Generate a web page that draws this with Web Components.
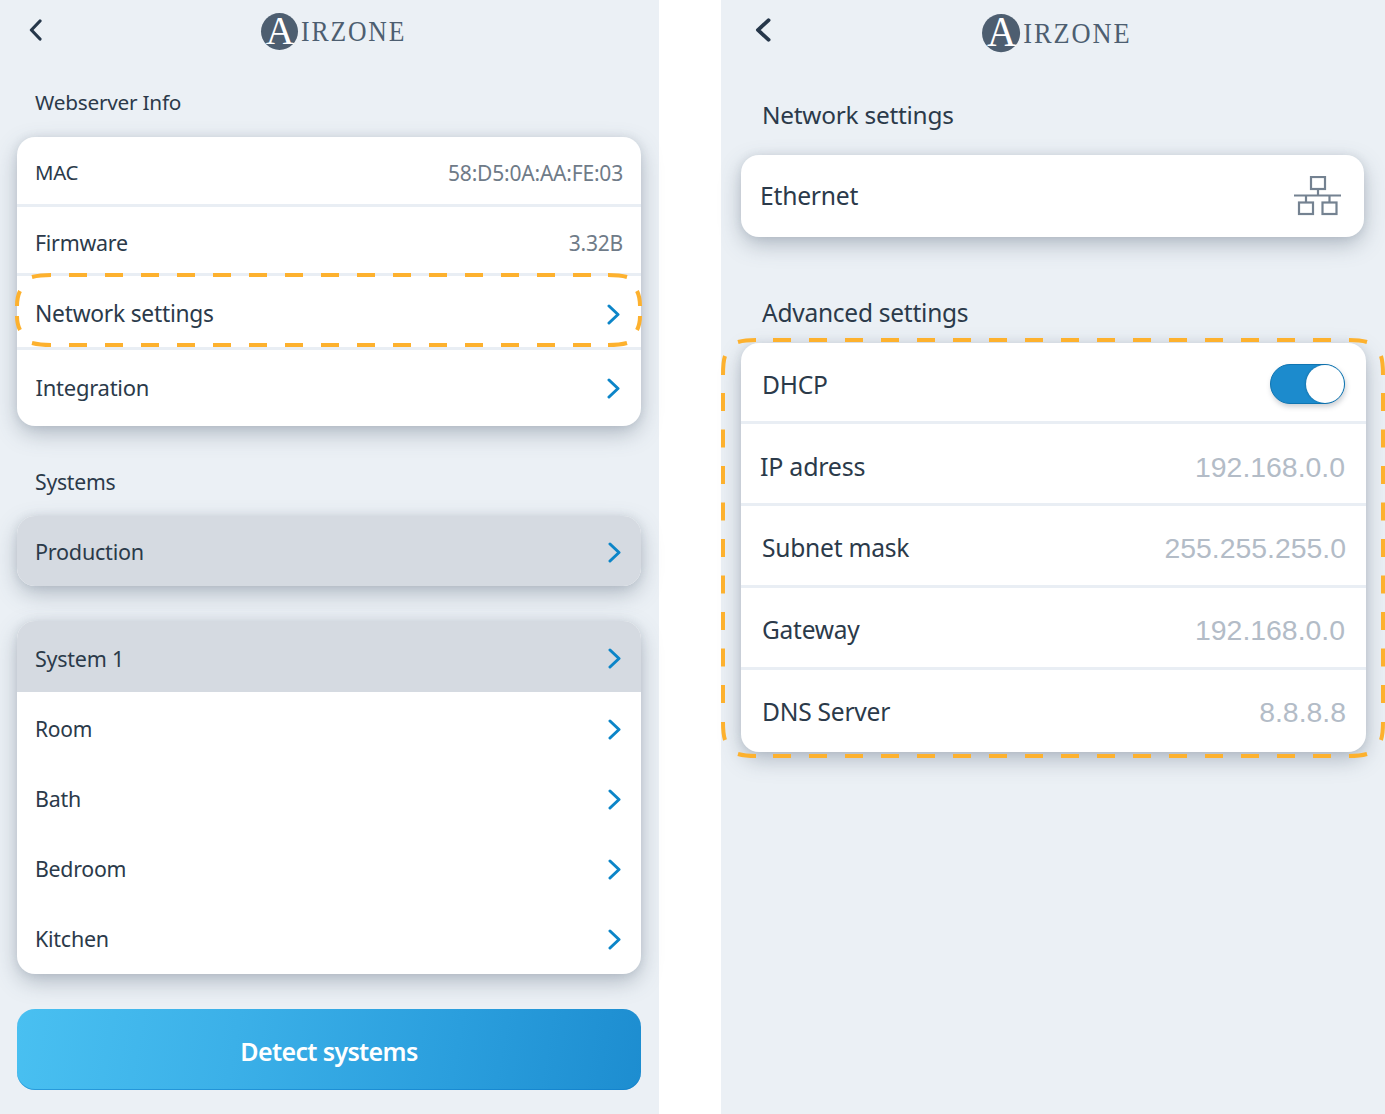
<!DOCTYPE html>
<html lang="en"><head><meta charset="utf-8"><title>Airzone</title>
<style>
html,body{margin:0;padding:0;background:#fff}
body{width:1385px;height:1114px;overflow:hidden;display:flex;font-family:"Noto Sans","Open Sans",sans-serif;color:#2b3a4a}
</style></head><body>
<app-panel style="--w:659px;--pl:17px;--mr:62px">
  <top-bar style="--h:62px;--bx:29px;--by:19px;--bw:13px;--bh:22px;--lx:244px;--ly:12px">
    <air-logo style="--s:1"></air-logo>
  </top-bar>
  <section-title style="--mt:24px;--mb:19px;--fs:20.8px;--x:18px">Webserver Info</section-title>
  <list-card style="--w:624px">
    <list-row h="70" sep style="--fs:20.4px;--ty:4px;--pl:18px;--lb:2px">MAC<span slot="value">58:D5:0A:AA:FE:03</span></list-row>
    <list-row h="69" sep style="--fs:21.4px;--ty:6px;--pl:18px;--lb:2px">Firmware<span slot="value">3.32B</span></list-row>
    <list-row h="74" sep style="--fs:22.8px;--ty:5px;--pl:18px;--lb:2px" chev>Network settings</list-row>
    <list-row h="76" style="--fs:22px;--pl:18.500px;--lb:2px" chev>Integration</list-row>
  </list-card>
  <section-title style="--mt:40px;--mb:18px;--fs:21.2px;--x:18px">Systems</section-title>
  <list-card style="--w:624px">
    <list-row h="70" shade chev style="--fs:21.600px;--cr:20px;--ty:2px;--pl:18px;--lb:2px">Production</list-row>
  </list-card>
  <list-card style="--w:624px;--mt:35px">
    <list-row h="71" shade chev style="--fs:21.500px;--cr:20px;--ty:4px;--pl:18px">System 1</list-row>
    <list-row h="70" chev style="--fs:21px;--cr:20px;--ty:4px;--pl:18px">Room</list-row>
    <list-row h="70" chev style="--fs:21.400px;--cr:20px;--ty:4px;--pl:18px;--lb:2px">Bath</list-row>
    <list-row h="70" chev style="--fs:21.300px;--cr:20px;--ty:4px;--pl:18px;--lb:2px">Bedroom</list-row>
    <list-row h="72" chev style="--fs:21.500px;--cr:20px;--ty:2px;--pl:18px;--lb:2px">Kitchen</list-row>
  </list-card>
  <action-button>Detect systems</action-button>
  <dash-outline x="17" y="275" w="623" h="70" kind="a"></dash-outline>
</app-panel>
<app-panel style="--w:664px;--pl:20px;--mr:0px">
  <top-bar style="--h:66px;--bx:31px;--by:18px;--bw:16px;--bh:24px;--lx:241px;--ly:13px">
    <air-logo style="--s:1.03"></air-logo>
  </top-bar>
  <section-title style="--mt:33px;--mb:24px;--fs:24.4px;--x:21px">Network settings</section-title>
  <list-card style="--w:623px">
    <list-row h="82" style="--fs:24.700px;--pl:19px;--tb:2px">Ethernet<net-icon slot="value"></net-icon></list-row>
  </list-card>
  <section-title style="--mt:60px;--mb:14px;--fs:24.500px;--x:21px">Advanced settings</section-title>
  <list-card style="--w:625px">
    <list-row h="81" sep style="--fs:24.600px;--pl:21px;--pr:21px;--ty:4px">DHCP<toggle-switch slot="value"></toggle-switch></list-row>
    <list-row h="82" sep large style="--fs:25px;--pl:19px;--pr:21px;--ty:6px;--lb:2px">IP adress<span slot="value">192.168.0.0</span></list-row>
    <list-row h="82" sep large style="--fs:24.600px;--pl:21px;--pr:20px;--ty:4px">Subnet mask<span slot="value">255.255.255.0</span></list-row>
    <list-row h="82" sep large style="--fs:24.500px;--pl:21px;--pr:21px;--ty:4px">Gateway<span slot="value">192.168.0.0</span></list-row>
    <list-row h="82" large style="--fs:24.600px;--pl:21px;--pr:20px">DNS Server<span slot="value">8.8.8.8</span></list-row>
  </list-card>
  <dash-outline x="2" y="340" w="660" h="416" kind="b"></dash-outline>
</app-panel>
<script>
function shell(el, html){ const r = el.attachShadow({mode:'open'}); r.innerHTML = html; return r; }
customElements.define('app-panel', class extends HTMLElement{
  constructor(){super(); shell(this,`<style>
    :host{display:flex;flex-direction:column;align-items:flex-start;position:relative;box-sizing:border-box;flex:none;width:var(--w);height:1114px;margin-right:var(--mr);padding-left:var(--pl);background:#ebf0f5}
  </style><slot></slot>`);}
});
customElements.define('top-bar', class extends HTMLElement{
  constructor(){super(); shell(this,`<style>
    :host{display:block;position:relative;align-self:stretch;height:var(--h)}
    svg{position:absolute;left:calc(var(--bx) - 17px);top:var(--by);width:var(--bw);height:var(--bh)}
    .l{position:absolute;left:var(--lx);top:var(--ly)}
  </style><svg viewBox="0 0 13 22" preserveAspectRatio="none" aria-hidden="true"><path d="M11 2 2.4 11 11 20" fill="none" stroke="#26374a" stroke-width="3.2" stroke-linecap="round" stroke-linejoin="round"/></svg><div class="l"><slot></slot></div>`);}
});
customElements.define('air-logo', class extends HTMLElement{
  constructor(){super(); shell(this,`<style>
    :host{display:block;width:148px;height:38px;transform:scale(var(--s));transform-origin:0 0;font-family:"Liberation Serif",serif;color:#4d5e70}
    .w{display:flex;align-items:center;height:38px}
    .c{position:relative;width:37px;height:37px;border-radius:50%;background:#4d5e70;color:#fff;font-size:41px;line-height:37px;text-align:center;flex:none;overflow:visible}
    .c span{display:block;transform:translate(.5px,-1px) scaleX(.96)}
    .t{font-size:29px;line-height:38px;letter-spacing:2.1px;margin-left:3px;transform:scaleX(.885);transform-origin:0 50%;white-space:nowrap}
  </style><div class="w"><div class="c"><span>A</span></div><div class="t">IRZONE</div></div>`);}
});
customElements.define('section-title', class extends HTMLElement{
  constructor(){super(); shell(this,`<style>
    :host{display:block;height:32px;line-height:32px;margin:var(--mt) 0 var(--mb);padding-left:var(--x);font-size:var(--fs);white-space:nowrap;color:#2b3a4a;letter-spacing:-.25px}
  </style><slot></slot>`);}
});
customElements.define('list-card', class extends HTMLElement{
  constructor(){super(); shell(this,`<style>
    :host{display:block;flex:none;box-sizing:border-box;width:var(--w);margin-top:var(--mt,0);border-radius:18px;background:#fff;box-shadow:0 8px 22px -1px rgba(70,85,105,.36),0 0 8px rgba(90,105,125,.12)}
  </style><slot></slot>`);}
});
customElements.define('list-row', class extends HTMLElement{
  constructor(){super(); const h=this.getAttribute('h')||70; shell(this,`<style>
    :host{display:flex;align-items:center;justify-content:space-between;box-sizing:border-box;height:${h}px;padding:var(--ty,0) var(--pr,18px) var(--tb,0) var(--pl,18px);font-size:var(--fs,21px);color:#2b3a4a;white-space:nowrap;letter-spacing:-.25px}
    :host(:first-child){border-top-left-radius:18px;border-top-right-radius:18px}
    :host(:last-child){border-bottom-left-radius:18px;border-bottom-right-radius:18px}
    :host([sep]){border-bottom:3px solid #e9eef4}
    :host([shade]){background:#d5dae1}
    .lbl{margin-bottom:var(--lb,0)}
    ::slotted([slot=value]){font-size:21px;color:#6f7b88;letter-spacing:-.2px}
    :host([large]) ::slotted([slot=value]){font-family:"Liberation Sans",Arial,sans-serif;font-size:28.4px;color:#b3bcc7;letter-spacing:0;margin-top:2px}
    svg{width:13px;height:21px;margin-right:calc(var(--cr,21px) - 18px);flex:none}
  </style><span class="lbl"><slot></slot></span><slot name="value"></slot>${this.hasAttribute('chev')?'<svg viewBox="0 0 13 21"><path d="M2 2 11 10.500 2 19" fill="none" stroke="#0c85c8" stroke-width="3" stroke-linecap="round" stroke-linejoin="round"/></svg>':''}`);}
});
customElements.define('net-icon', class extends HTMLElement{
  constructor(){super(); shell(this,`<style>:host{display:block;width:47px;height:40px;margin:2px 5px 0 0}svg{display:block}</style>
  <svg width="47" height="40" viewBox="0 0 47 40" fill="none" stroke="#748291" stroke-width="2.2"><rect x="17" y="1" width="14" height="12"/><path d="M24 13V19.500M0 19.500H47M12 19.500V26.500M35.500 19.500V26.500"/><rect x="5" y="26.500" width="14" height="11.500"/><rect x="28.500" y="26.500" width="14" height="11.500"/></svg>`);}
});
customElements.define('toggle-switch', class extends HTMLElement{
  constructor(){super(); shell(this,`<style>
    :host{display:block;position:relative;width:75px;height:40px;box-sizing:border-box;border-radius:20px;background:#1c8bcd;border:1px solid #0f75b2;box-shadow:1px 3px 5px rgba(60,70,90,.25);font-size:0}
    i{position:absolute;right:0;top:0;width:38px;height:38px;border-radius:50%;background:#fff;box-shadow:-1px 0 2px rgba(0,0,0,.15)}
  </style><i></i>`);}
});
customElements.define('action-button', class extends HTMLElement{
  constructor(){super(); shell(this,`<style>
    :host{display:flex;align-items:center;justify-content:center;box-sizing:border-box;width:624px;height:81px;margin-top:35px;padding-top:2px;border-radius:18px;color:#fff;font-size:25px;font-weight:600;letter-spacing:-.65px;background:linear-gradient(100deg,#49c0f1 0%,#3bb0e8 35%,#2a9edd 70%,#1d8dd0 100%);box-shadow:inset 0 -1px 0 rgba(10,120,200,.5);flex:none}
  </style><slot></slot>`);}
});
customElements.define('dash-outline', class extends HTMLElement{
  constructor(){super();
    const x=+this.getAttribute('x'),y=+this.getAttribute('y'),w=+this.getAttribute('w'),h=+this.getAttribute('h'),k=this.getAttribute('kind');
    let d='';
    const R=x+w,B=y+h;
    if(k==='a'){
      for(let s=69;s<590;s+=36){ d+=`M${s} ${y}h18M${s} ${B}h18`; }
      d+=`M32 ${y+2}Q40 ${y} 51 ${y}M32 ${B-2}Q40 ${B} 51 ${B}`;
      d+=`M608 ${y}Q620 ${y} 627 ${y+2}M608 ${B}Q620 ${B} 627 ${B-2}`;
      d+=`M20 ${y+16}Q${x} ${y+22} ${x} ${y+31}M${x} ${y+41}Q${x} ${y+49} 20 ${y+55}`;
      d+=`M${R-3} ${y+16}Q${R} ${y+22} ${R} ${y+31}M${R} ${y+41}Q${R} ${y+49} ${R-3} ${y+55}`;
    } else {
      for(let s=773;s<1340;s+=36){ d+=`M${s-721} ${y}h18M${s-721} ${B}h18`; }
      d+=`M17 ${y+2}Q24 ${y} 35 ${y}M17 ${B-2}Q24 ${B} 35 ${B}`;
      d+=`M628 ${y}Q639 ${y} 646 ${y+2}M628 ${B}Q639 ${B} 646 ${B-2}`;
      d+=`M${x} ${y+35}Q${x} ${y+22} ${x+2} ${y+16}M${R} ${y+35}Q${R} ${y+22} ${R-2} ${y+16}`;
      d+=`M${x} ${B-34}Q${x} ${B-22} ${x+2} ${B-16}M${R} ${B-34}Q${R} ${B-22} ${R-2} ${B-16}`;
      for(let i=0;i<9;i++){ const s=393+i*36.5; d+=`M${x} ${s}v18M${R} ${s}v18`; }
    }
    shell(this,`<style>:host{position:absolute;left:0;top:0;width:100%;height:100%;pointer-events:none}svg{display:block;overflow:visible}</style>
    <svg width="100%" height="100%"><path d="${d}" fill="none" stroke="#fdb12e" stroke-width="4"/></svg>`);
  }
});
</script>
</body></html>
